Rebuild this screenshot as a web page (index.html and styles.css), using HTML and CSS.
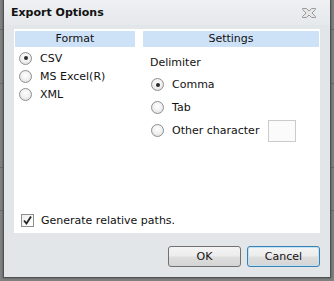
FILE: index.html
```html
<!DOCTYPE html>
<html lang="en">
<head>
    <meta charset="UTF-8">
    <title>Export Options</title>
    <link rel="stylesheet" href="styles.css">
</head>
<body>
    <div class="backdrop">
        <div class="dialog">
            <div class="title-bar">
                <span class="title">Export Options</span>
                <svg class="close" viewBox="0 0 16 12" width="16" height="12">
                    <path d="M1.5 1.5h4l2.5 2.5 2.5-2.5h4v1l-3.5 3.5 3.5 3.5v1h-4L8 8 5.5 10.5h-4v-1L5 6 1.5 2.5z" fill="#e6e6e6" stroke="#9a9a9a" stroke-width="1"/>
                </svg>
            </div>

            <div class="panel">
                <div class="columns">
                    <div class="column format">
                        <div class="header">Format</div>
                        <div class="options">
                            <label class="option"><span class="radio checked"></span>CSV</label>
                            <label class="option"><span class="radio"></span>MS Excel(R)</label>
                            <label class="option"><span class="radio"></span>XML</label>
                        </div>
                    </div>
                    <div class="column settings">
                        <div class="header">Settings</div>
                        <div class="delimiter">
                            <div class="label">Delimiter</div>
                            <label class="option wide"><span class="radio checked"></span>Comma</label>
                            <label class="option wide"><span class="radio"></span>Tab</label>
                            <label class="option wide"><span class="radio"></span>Other character<span class="char-input"></span></label>
                        </div>
                    </div>
                </div>
                <label class="check-row">
                    <span class="checkbox">
                        <svg viewBox="0 0 11 11" width="11" height="11">
                            <path d="M2 5.5l2.5 3L9 1.5" fill="none" stroke="#222" stroke-width="1.8"/>
                        </svg>
                    </span>
                    Generate relative paths.
                </label>
            </div>

            <div class="buttons">
                <button class="btn">OK</button>
                <button class="btn focused">Cancel</button>
            </div>
        </div>
    </div>
</body>
</html>
```

FILE: styles.css
```css
* {
    margin: 0;
    padding: 0;
    box-sizing: border-box;
    font-family: "DejaVu Sans", Verdana, sans-serif;
}

body {
    width: 334px;
    height: 281px;
    overflow: hidden;
    background: #7f8080;
}

.backdrop {
    height: 281px;
    padding: 0 3px 3px 3px;
    background:
        linear-gradient(#6a6a6a, #6a6a6a) 0 29px / 100% 1px no-repeat,
        linear-gradient(#6a6a6a, #6a6a6a) 0 83px / 100% 1px no-repeat,
        linear-gradient(#6a6a6a, #6a6a6a) 0 167px / 100% 1px no-repeat,
        linear-gradient(#6a6a6a, #6a6a6a) 0 210px / 100% 1px no-repeat,
        #7f8080;
}

.dialog {
    height: 278px;
    width: 328px;
    background: #e3e6e9;
    border: 1px solid #4f5153;
    border-top: none;
    display: flex;
    flex-direction: column;
    box-shadow: 0 0 2px rgba(0, 0, 0, 0.4);
}

.title-bar {
    height: 25px;
    display: flex;
    align-items: center;
    justify-content: space-between;
    padding: 0 13px 0 7px;
    background: linear-gradient(180deg, #eef0f2 0%, #e6e9ec 100%);
}

.title {
    font-weight: bold;
    font-size: 11px;
    color: #111;
}

.close {
    display: block;
    margin-top: 1px;
}

.panel {
    margin: 4px 10px 0 10px;
    height: 204px;
    background: #fff;
    padding: 2px 1px 0 1px;
    display: flex;
    flex-direction: column;
}

.columns {
    display: flex;
    gap: 8px;
    flex: 1;
}

.column.format {
    width: 120px;
}

.column.settings {
    flex: 1;
}

.header {
    height: 16px;
    background: #cde1f7;
    border-radius: 1px;
    text-align: center;
    font-size: 11px;
    line-height: 16px;
    color: #111;
}

.options {
    padding: 2px 0 0 4px;
}

.option {
    display: flex;
    align-items: center;
    height: 18px;
    font-size: 11px;
    color: #111;
    gap: 8px;
}

.delimiter {
    padding: 7px 0 0 7px;
}

.label {
    font-size: 11px;
    color: #111;
    height: 19px;
    line-height: 18px;
}

.option.wide {
    height: 23px;
    padding-left: 1px;
}

.radio {
    width: 13px;
    height: 13px;
    border-radius: 50%;
    border: 1px solid #8c8e90;
    background: radial-gradient(circle at 50% 40%, #ffffff 0%, #f2f2f2 45%, #d6d8da 100%);
    display: flex;
    align-items: center;
    justify-content: center;
    flex-shrink: 0;
}

.radio.checked::after {
    content: '';
    width: 4px;
    height: 4px;
    border-radius: 50%;
    background: #2a2a2a;
}

.char-input {
    width: 28px;
    height: 22px;
    margin-left: 1px;
    border: 1px solid #c9cbcd;
    background: #fbfbfb;
}

.check-row {
    display: flex;
    align-items: center;
    gap: 7px;
    height: 14px;
    margin: 0 0 6px 6px;
    font-size: 11px;
    color: #111;
}

.checkbox {
    width: 13px;
    height: 13px;
    border: 1px solid #8c8e90;
    background: linear-gradient(135deg, #eeeeee, #ffffff);
    display: flex;
    align-items: center;
    justify-content: center;
}

.buttons {
    display: flex;
    justify-content: flex-end;
    gap: 6px;
    padding: 13px 10px 0 0;
}

.btn {
    width: 73px;
    height: 21px;
    border: 1px solid #707070;
    border-radius: 3px;
    background: linear-gradient(180deg, #f4f4f4 0%, #ececec 48%, #dedede 52%, #d4d4d4 100%);
    font-size: 11px;
    color: #111;
}

.btn.focused {
    border-color: #3c7fb1;
    box-shadow: inset 0 0 0 1px #bfe3f6;
}
```
